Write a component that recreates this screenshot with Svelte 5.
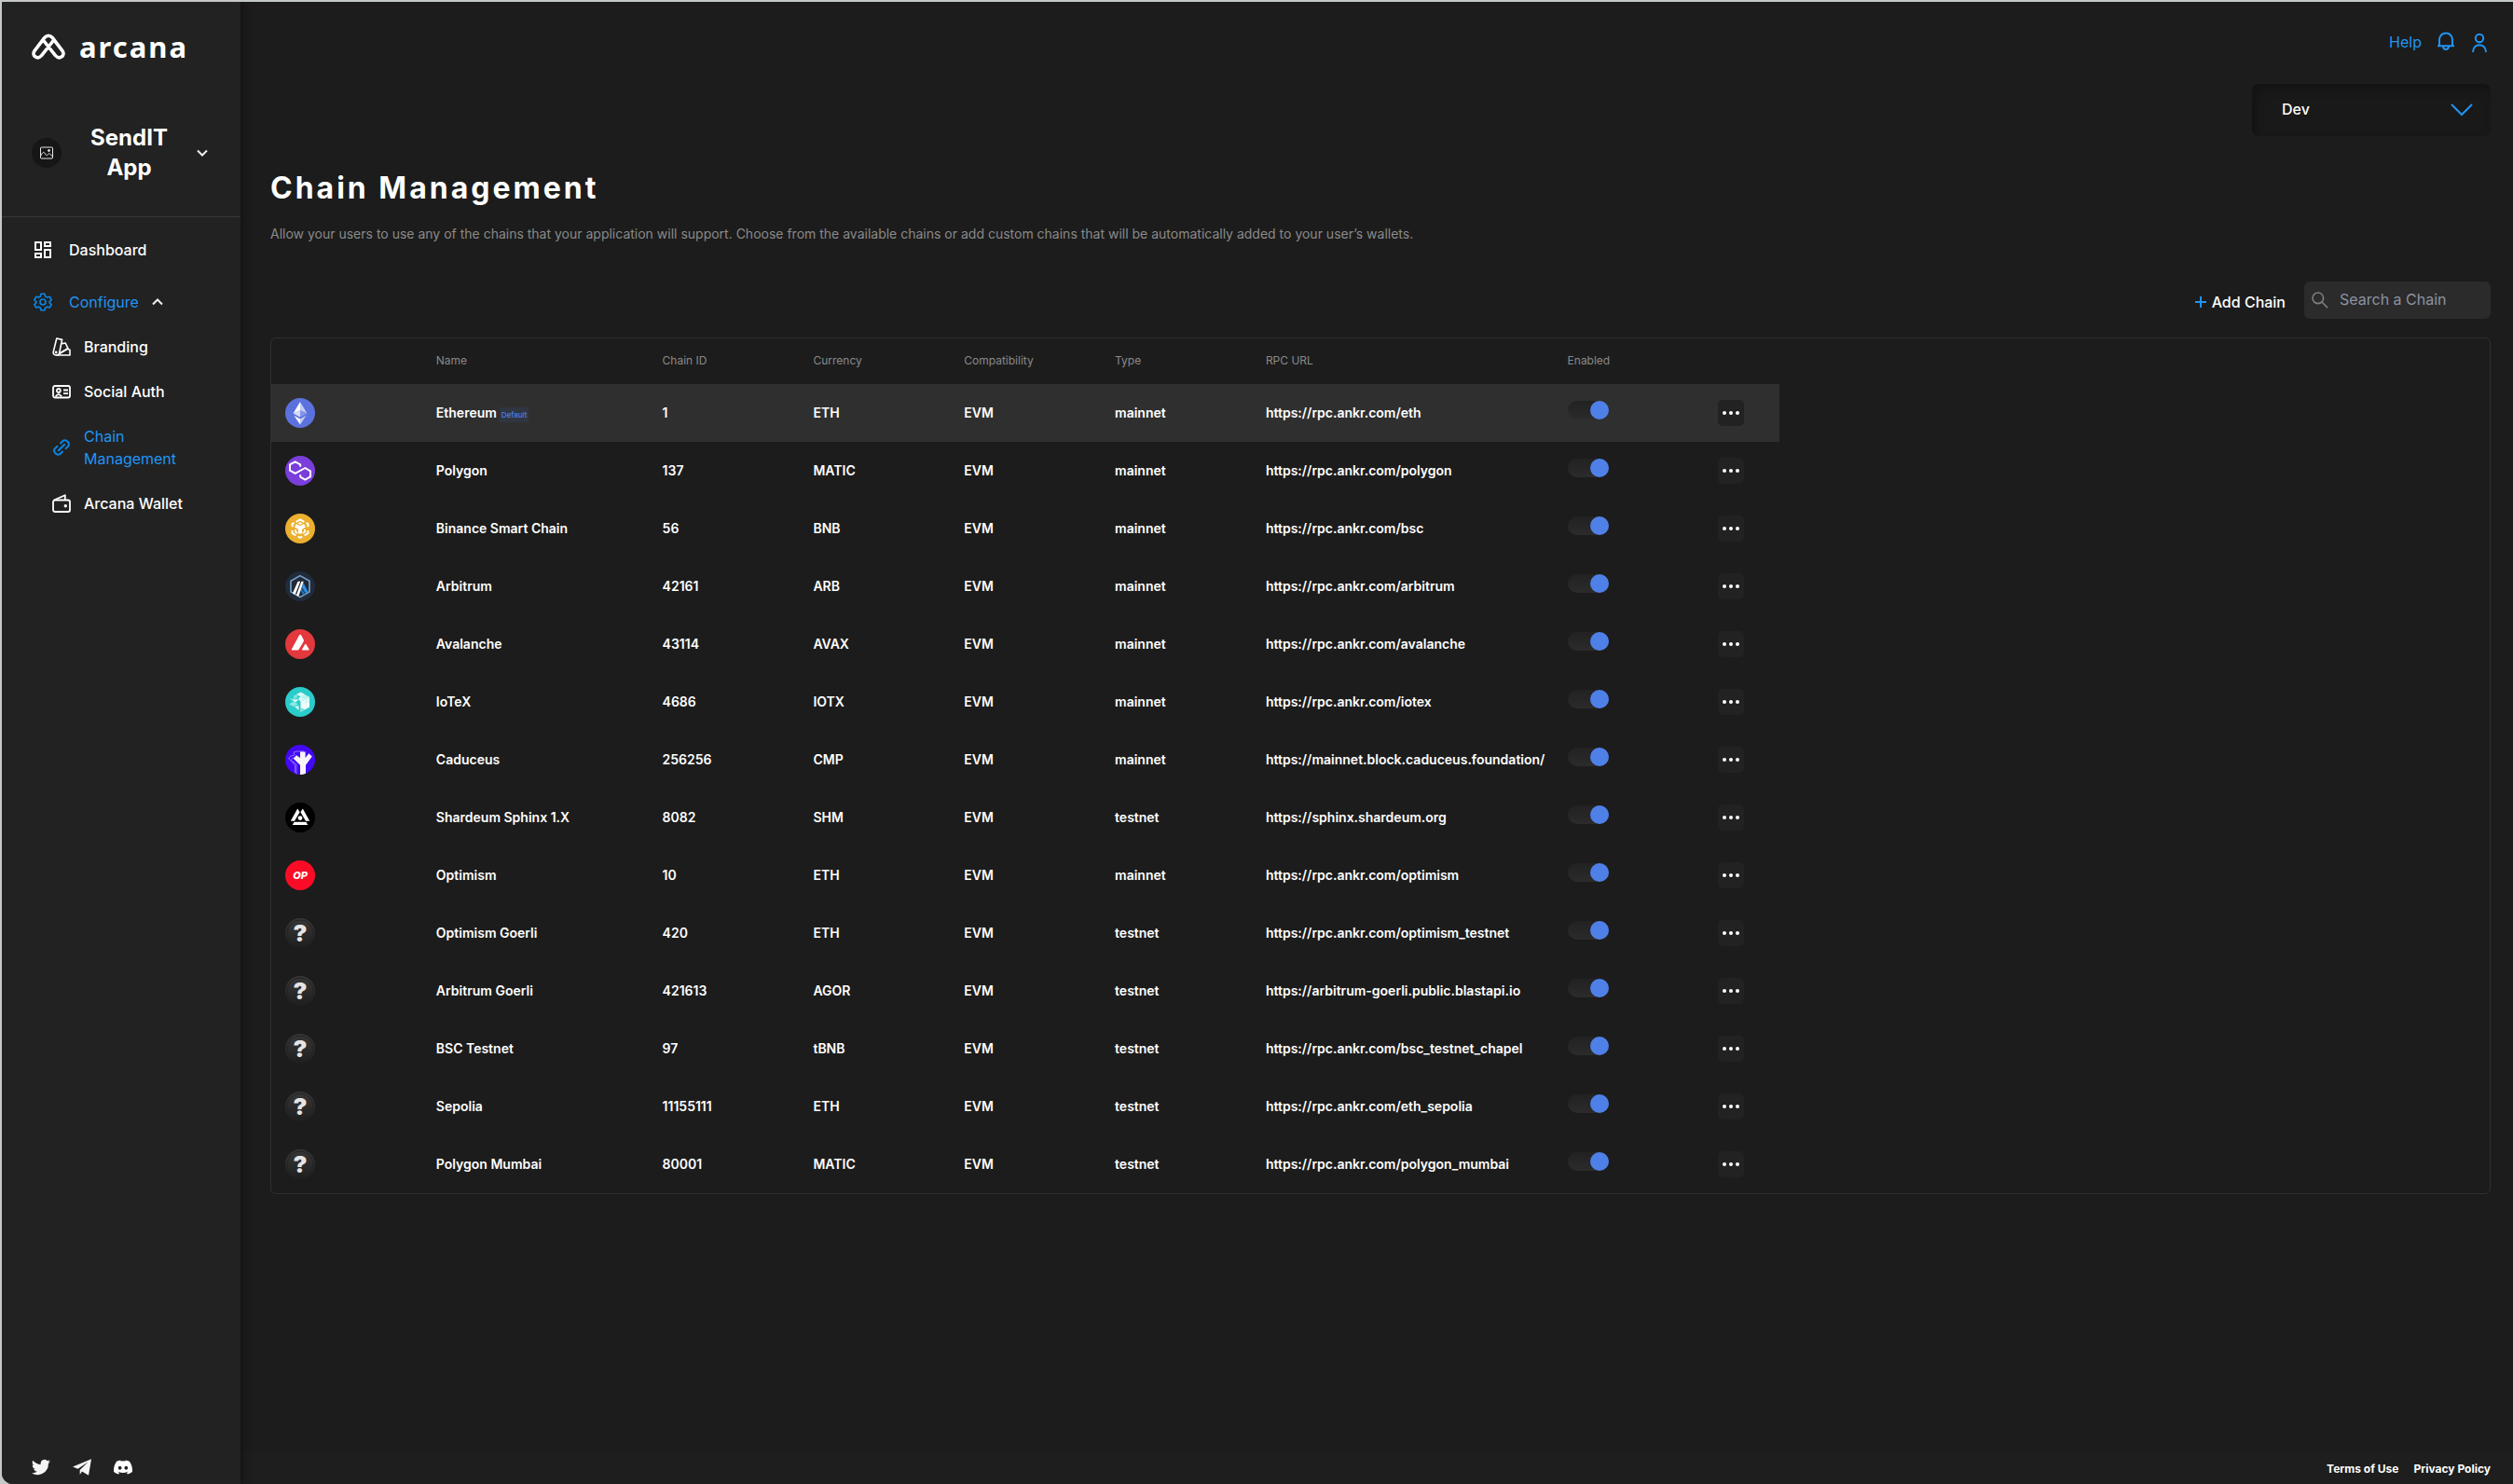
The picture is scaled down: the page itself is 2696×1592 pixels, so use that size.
<script>
  const chains = [
    { icon: 'eth', name: 'Ethereum', id: '1', currency: 'ETH', type: 'mainnet', url: 'https://rpc.ankr.com/eth', isDefault: true },
    { icon: 'polygon', name: 'Polygon', id: '137', currency: 'MATIC', type: 'mainnet', url: 'https://rpc.ankr.com/polygon' },
    { icon: 'bsc', name: 'Binance Smart Chain', id: '56', currency: 'BNB', type: 'mainnet', url: 'https://rpc.ankr.com/bsc' },
    { icon: 'arbitrum', name: 'Arbitrum', id: '42161', currency: 'ARB', type: 'mainnet', url: 'https://rpc.ankr.com/arbitrum' },
    { icon: 'avalanche', name: 'Avalanche', id: '43114', currency: 'AVAX', type: 'mainnet', url: 'https://rpc.ankr.com/avalanche' },
    { icon: 'iotex', name: 'IoTeX', id: '4686', currency: 'IOTX', type: 'mainnet', url: 'https://rpc.ankr.com/iotex' },
    { icon: 'caduceus', name: 'Caduceus', id: '256256', currency: 'CMP', type: 'mainnet', url: 'https://mainnet.block.caduceus.foundation/' },
    { icon: 'shardeum', name: 'Shardeum Sphinx 1.X', id: '8082', currency: 'SHM', type: 'testnet', url: 'https://sphinx.shardeum.org' },
    { icon: 'optimism', name: 'Optimism', id: '10', currency: 'ETH', type: 'mainnet', url: 'https://rpc.ankr.com/optimism' },
    { icon: 'unknown', name: 'Optimism Goerli', id: '420', currency: 'ETH', type: 'testnet', url: 'https://rpc.ankr.com/optimism_testnet' },
    { icon: 'unknown', name: 'Arbitrum Goerli', id: '421613', currency: 'AGOR', type: 'testnet', url: 'https://arbitrum-goerli.public.blastapi.io' },
    { icon: 'unknown', name: 'BSC Testnet', id: '97', currency: 'tBNB', type: 'testnet', url: 'https://rpc.ankr.com/bsc_testnet_chapel' },
    { icon: 'unknown', name: 'Sepolia', id: '11155111', currency: 'ETH', type: 'testnet', url: 'https://rpc.ankr.com/eth_sepolia' },
    { icon: 'unknown', name: 'Polygon Mumbai', id: '80001', currency: 'MATIC', type: 'testnet', url: 'https://rpc.ankr.com/polygon_mumbai' },
  ];
  let enabled = $state(chains.map(() => true));
  let query = $state('');
</script>

{#snippet chainIcon(kind)}
  <svg class="chain-icon" viewBox="0 0 32 32" aria-hidden="true">
    {#if kind === 'eth'}
      <circle cx="16" cy="16" r="16" fill="#5b72de" />
      <path d="M16 4 8.600 16.400 16 13.200Z" fill="#fff" />
      <path d="M16 4 23.400 16.400 16 13.200Z" fill="#c3cbf5" />
      <path d="M8.600 16.400 16 13.200V20.400Z" fill="#d5dbf8" />
      <path d="M23.400 16.400 16 13.200V20.400Z" fill="#8595e6" />
      <path d="M9.400 18.700 16 22.400V28.600Z" fill="#fff" />
      <path d="M22.600 18.700 16 22.400V28.600Z" fill="#c3cbf5" />
    {:else if kind === 'polygon'}
      <circle cx="16" cy="16" r="16" fill="#7a3edb" />
      <path d="M16.200 11.700V9.400L10.700 6.300 5 9.400V15.700L10.700 18.900 21.300 13 27 16.300V22.400L21.300 25.600 16.200 22.600V20.200" fill="none" stroke="#fff" stroke-width="2" stroke-linejoin="round" />
    {:else if kind === 'bsc'}
      <circle cx="16" cy="16" r="16" fill="#ecb02f" />
      <g fill="none" stroke="#fff" stroke-width="2">
        <path d="M11.600 8.800 16 6.300 20.400 8.800M7.600 14.300V11L9.600 9.900M22.400 9.900 24.400 11V14.300M7.600 18V21.200L11.400 23.400M24.400 18V21.200L20.600 23.400M13.600 24.500 16 25.900 18.400 24.500" />
        <path d="M11 12.800 16 15.600 21 12.800M16 15V21.600" stroke-width="4" />
        <path d="M11 17V19.500L13.200 20.800M21 17V19.500L18.800 20.800" />
      </g>
      <path d="M16 9 18.400 10.400 16 11.800 13.600 10.400Z" fill="#fff" />
    {:else if kind === 'arbitrum'}
      <circle cx="16" cy="16" r="16" fill="#202b3c" />
      <path d="M16 4.600 26 10.300V21.900L16 27.600 6 21.900V10.300Z" fill="#1f2937" stroke="#7ba3c6" stroke-width="1.600" />
      <path d="M17.800 17.200 19.600 12.600 24.600 22 22 23.600Z" fill="#2b8fe8" />
      <path d="M16.400 20.400 17.400 18 21.200 24.200 19.400 25.400Z" fill="#1d74c4" />
      <path d="M13.500 10.800H16.200L10.600 25 8 23.300ZM17.400 10.800H19.800L14.300 26.800 11.900 25.500Z" fill="#fff" />
    {:else if kind === 'avalanche'}
      <circle cx="16" cy="16" r="16" fill="#e2383e" />
      <path d="M16.100 5.800q.7 0 1.100.7l2.500 4.700q.5 1 0 2L14.600 21.700q-.5.800-1.400.8H7.600q-1.200 0-.7-1.100L15 6.500q.4-.7 1.100-.7ZM21 16.400q.8-1.300 1.600 0L25.400 21.300q.5 1.200-.6 1.200H18.800q-1.200 0-.6-1.200Z" fill="#fff" />
    {:else if kind === 'iotex'}
      <circle cx="16" cy="16" r="16" fill="#2accc9" />
      <path d="M16.500 5.400 26 10.700 16.500 16Z" fill="#b9f2ef" />
      <path d="M16.500 16 26 10.700V21.500L16.500 27Z" fill="#fff" opacity=".92" />
      <path d="M16.500 5.400 21 8 16.500 10.600 12 8ZM14 12l2.500-1.400L21 13.200 16.500 16Z" fill="#d9f9f7" />
      <path d="M21 13.400 26 10.700 26 16 21 18.800Z" fill="#d9f9f7" />
      <path d="M9 9.400 13 7.600V11.600L9 13.400Z" fill="#7ee4e1" />
      <path d="M4.400 12 9 13.400 15 13 11 16.400Z" fill="#dbfaf8" />
      <path d="M4 18.400 9 15.600 14 18.400 9 21Z" fill="#8ae8e5" />
      <path d="M10 21 14.500 20V25Z" fill="#d9f9f7" />
      <path d="M16.500 22 21 24.200 17 27Z" fill="#6fe0dd" />
    {:else if kind === 'caduceus'}
      <clipPath id="cad"><circle cx="16" cy="16" r="16" /></clipPath>
      <circle cx="16" cy="16" r="16" fill="#4309f5" />
      <g clip-path="url(#cad)">
        <path d="M12 32V21L3.500 15 6 12 10 11 9 8 13 7H20M9.500 13 6 16.500 10.500 22V30" fill="none" stroke="#9378fb" stroke-width=".9" />
        <path d="M16 7.600H21.600V14L25.200 9.300 28.800 12.600 22 21.800V32H16V21.800L8.800 14.800 12 11.300 16 14Z" fill="#f7f4f8" />
      </g>
    {:else if kind === 'shardeum'}
      <circle cx="16" cy="16" r="16" fill="#000" />
      <path d="M13.200 6.600 15.600 10.200 10 19.800H5.800ZM18.800 6.600 26.200 19.800H22L16.400 10.200Z" fill="#fff" />
      <path d="M9.600 20.800H22.400L24.200 24H7.800Z" fill="#fff" />
      <circle cx="16" cy="16.600" r="2.400" fill="#fff" />
    {:else if kind === 'optimism'}
      <circle cx="16" cy="16" r="16" fill="#fb0c26" />
      <text class="op" x="16" y="20" text-anchor="middle">OP</text>
    {:else}
      <linearGradient id="coin" x1="0" y1="0" x2="0" y2="1">
        <stop offset="0" stop-color="#383838" />
        <stop offset="1" stop-color="#1e1e1e" />
      </linearGradient>
      <circle cx="16" cy="16" r="16" fill="url(#coin)" />
      <circle cx="16" cy="16" r="14" fill="none" stroke="#232323" />
      <text class="question" x="16" y="25" text-anchor="middle">?</text>
    {/if}
  </svg>
{/snippet}

<div class="app">
  <aside class="sidebar">
    <a class="brand" href="#home">
      <svg class="mark" viewBox="0 0 36 28" aria-hidden="true">
        <g fill="none" stroke="#fff" stroke-width="3.600" stroke-linecap="round" stroke-linejoin="round">
          <path d="M22.500 8.500 10.500 23.600C6 28.500 -.5 23.500 3 18.600L13.600 4.600Q18 0 22.400 4.600L33 18.600C36.500 23.500 30 28.500 25.500 23.600L13.500 8.500" />
        </g>
      </svg>
      <span class="wordmark">arcana</span>
    </a>

    <button class="app-switch" type="button">
      <span class="app-thumb">
        <svg viewBox="0 0 16 16" width="16" height="16" fill="none" stroke="#e8e8e8" aria-hidden="true">
          <rect x="1.500" y="2" width="13" height="12" rx="1" />
          <path d="M1.500 11.500C4 6.500 5 6.500 6.500 9S8.500 11 9.500 9.500 12 9 14.500 12" />
          <circle cx="10.500" cy="5.500" r="1" fill="#e8e8e8" />
        </svg>
      </span>
      <span class="app-name">SendIT App</span>
      <svg class="caret" viewBox="0 0 12 8" aria-hidden="true"><path d="M1 1.500 6 6.500 11 1.500" /></svg>
    </button>

    <nav class="nav">
      <a class="item" href="#dashboard">
        <svg viewBox="0 0 20 20" fill="none" stroke="#fff" stroke-width="2" aria-hidden="true">
          <path d="M2 2H8V10H2ZM12 2H18V6H12ZM2 14H8V18H2ZM12 10H18V18H12Z" />
        </svg>
        Dashboard
      </a>
      <a class="item active" href="#configure">
        <svg viewBox="0 0 24 24" fill="none" stroke="#0a84e4" stroke-width="2" stroke-linejoin="round" aria-hidden="true">
          <path d="M9.600 1.500H14.400L15.200 4.700 17.400 6 20.600 5.100 23 9.300 20.600 11.500V13L23 15.200 20.600 19.200 17.400 18.200 15.200 19.500 14.400 22.500H9.600L8.800 19.500 6.600 18.200 3.400 19.200 1 15.200 3.400 13V11.500L1 9.300 3.400 5.100 6.600 6 8.800 4.700Z" />
          <circle cx="12" cy="12" r="3.600" />
        </svg>
        <span class="with-caret">
          Configure
          <svg class="caret" viewBox="0 0 12 8" aria-hidden="true"><path d="M1 6.500 6 1.500 11 6.500" /></svg>
        </span>
      </a>
      <div class="sub">
        <a href="#branding">
          <svg viewBox="0 0 20 20" fill="none" stroke="#fff" stroke-width="1.600" stroke-linejoin="round" aria-hidden="true">
            <path d="M4.800 1 10.600 2.400 7.600 17Q6.800 19.400 4 19 .8 18.500 1.200 15.600Z" />
            <path d="M10 6.800 14.200 6 17 11.800 7.500 17.500" />
            <path d="M8 17 16.500 12.200 19 13.400V19H4.500" />
            <circle cx="4.200" cy="16" r=".6" />
          </svg>
          Branding
        </a>
        <a href="#social-auth">
          <svg viewBox="0 0 20 20" fill="none" stroke="#fff" stroke-width="1.800" aria-hidden="true">
            <rect x="1" y="4" width="18" height="12.500" rx="2" />
            <circle cx="6.800" cy="9" r="2" />
            <path d="M3.500 15.500Q6.800 10.800 10.200 15.500M12 8.500H17M12 12.200H17" />
          </svg>
          Social Auth
        </a>
        <a class="active" href="#chain-management">
          <svg viewBox="0 0 20 20" fill="none" stroke="#0a84e4" stroke-width="2" stroke-linecap="round" aria-hidden="true">
            <path d="M6.800 13.200 13.200 6.800M9 5.500 11.800 2.700A4.400 4.400 0 0 1 17.500 8.500L14.500 11.200M11 14.500 8.200 17.300A4.400 4.400 0 0 1 2.500 11.500L5.500 8.800" />
          </svg>
          <span>Chain Management</span>
        </a>
        <a href="#wallet">
          <svg viewBox="0 0 20 20" fill="none" stroke="#fff" stroke-width="1.800" stroke-linejoin="round" aria-hidden="true">
            <rect x="1" y="6.500" width="18" height="12.500" rx="2" />
            <path d="M2 6.500 13.800 1.200V6.500" />
            <circle cx="14.300" cy="12.800" r=".8" fill="#fff" />
          </svg>
          Arcana Wallet
        </a>
      </div>
    </nav>

    <div class="socials">
      <a href="#twitter" aria-label="Twitter">
        <svg viewBox="0 0 24 24" fill="#f5f5f5"><path d="M23.900 4.600a10 10 0 0 1-2.800.8 4.900 4.900 0 0 0 2.100-2.700 9.800 9.800 0 0 1-3.100 1.200 4.900 4.900 0 0 0-8.400 4.500A14 14 0 0 1 1.600 3.200a4.900 4.900 0 0 0 1.500 6.500 4.900 4.900 0 0 1-2.200-.6v.1a4.900 4.900 0 0 0 3.900 4.800 5 5 0 0 1-2.200.1 4.900 4.900 0 0 0 4.600 3.400A9.900 9.900 0 0 1 0 19.500a14 14 0 0 0 21.500-12.400 10 10 0 0 0 2.400-2.500Z" /></svg>
      </a>
      <a href="#telegram" aria-label="Telegram">
        <svg viewBox="0 0 24 24" fill="#f5f5f5"><path d="M0 11.400 24 1.500 20.400 22.400 12 17.500 9.200 21.500V15.500L20 5 6.600 14Z" /></svg>
      </a>
      <a href="#discord" aria-label="Discord">
        <svg viewBox="0 0 24 24" fill="#fff"><path fill-rule="evenodd" d="M20.300 4.400A19.800 19.800 0 0 0 15.400 2.900l-.6 1.200a18 18 0 0 0-5.600 0L8.600 2.900A19.700 19.700 0 0 0 3.700 4.400C.5 9-.3 13.600.1 18.100A20 20 0 0 0 6.100 21.100L7.400 19.100 5.500 18.100l.4-.3a14 14 0 0 0 12.200 0l.4.3-1.900 1 1.300 2a20 20 0 0 0 6-3c.5-5.200-.8-9.700-3.600-13.700ZM8 15.300c-1.200 0-2.200-1-2.200-2.400s1-2.400 2.200-2.400 2.200 1.100 2.200 2.400-1 2.400-2.200 2.400Zm8 0c-1.200 0-2.200-1-2.200-2.400s1-2.400 2.200-2.400 2.200 1.100 2.200 2.400-1 2.400-2.200 2.400Z" /></svg>
      </a>
    </div>
  </aside>

  <div class="page">
    <header class="topbar">
      <a class="help" href="#help">Help</a>
      <button class="icon-btn" type="button" aria-label="Notifications">
        <svg viewBox="0 0 20 22" width="20" height="22" fill="none" stroke="#2194f3" stroke-width="2" stroke-linejoin="round" aria-hidden="true">
          <path d="M3 15V8.500A7 7 0 0 1 17 8.500V15M1 15.200H19M7 16C7.500 20 12.500 20 13 16" />
        </svg>
      </button>
      <button class="icon-btn" type="button" aria-label="Profile">
        <svg viewBox="0 0 20 22" width="20" height="22" fill="none" stroke="#2194f3" stroke-width="2" aria-hidden="true">
          <circle cx="10" cy="7" r="4.200" />
          <path d="M3 22C3 11.500 17 11.500 17 22" />
        </svg>
      </button>
    </header>

    <main class="content">
      <div class="env">
        <select aria-label="Environment">
          <option>Dev</option>
        </select>
        <svg viewBox="0 0 24 14" width="24" height="14" fill="none" stroke="#2194f3" stroke-width="2" aria-hidden="true"><path d="M1 1 12 12 23 1" /></svg>
      </div>

      <h1>Chain Management</h1>
      <p class="intro">Allow your users to use any of the chains that your application will support. Choose from the available chains or add custom chains that will be automatically added to your user’s wallets.</p>

      <div class="tools">
        <button class="add" type="button">
          <svg viewBox="0 0 12 12" width="12" height="12" stroke="#2194f3" stroke-width="2" aria-hidden="true"><path d="M6 0V12M0 6H12" /></svg>
          Add Chain
        </button>
        <label class="search">
          <svg viewBox="0 0 18 18" width="18" height="18" fill="none" stroke="#808080" stroke-width="1.600" aria-hidden="true">
            <circle cx="6.800" cy="6.800" r="5.800" />
            <path d="M11 11 17.200 17.200" />
          </svg>
          <input type="text" placeholder="Search a Chain" aria-label="Search a Chain" bind:value={query} />
        </label>
      </div>

      <div class="panel">
        <table>
          <colgroup>
            <col class="w10" /><col class="w15" /><col class="w10" /><col class="w10" /><col class="w10" />
            <col class="w10" /><col class="w20" /><col class="w10" /><col class="w5" />
          </colgroup>
          <thead>
            <tr>
              <th></th>
              <th>Name</th>
              <th>Chain ID</th>
              <th>Currency</th>
              <th>Compatibility</th>
              <th>Type</th>
              <th>RPC URL</th>
              <th>Enabled</th>
              <th></th>
            </tr>
          </thead>
          <tbody>
            {#each chains as chain, i}
              <tr class:default={chain.isDefault}>
                <td>{@render chainIcon(chain.icon)}</td>
                <td>{chain.name}{#if chain.isDefault}<span class="badge">Default</span>{/if}</td>
                <td>{chain.id}</td>
                <td>{chain.currency}</td>
                <td>EVM</td>
                <td>{chain.type}</td>
                <td>{chain.url}</td>
                <td class="switch-cell">
                  <input class="switch" type="checkbox" aria-label="Enable {chain.name}" bind:checked={enabled[i]} />
                </td>
                <td>
                  <button class="more" type="button" aria-label="Options for {chain.name}">
                    <svg viewBox="0 0 20 4" width="20" height="4" fill="#fff" aria-hidden="true"><circle cx="3" cy="2" r="2" /><circle cx="10" cy="2" r="2" /><circle cx="17" cy="2" r="2" /></svg>
                  </button>
                </td>
              </tr>
            {/each}
          </tbody>
        </table>
      </div>
    </main>

    <footer class="footer">
      <a href="#terms">Terms of Use</a>
      <a href="#privacy">Privacy Policy</a>
    </footer>
  </div>
</div>

<style>
  :global(body) {
    background: #c5c8c8;
  }
  .app, .app :global(*) {
    box-sizing: border-box;
  }
  .app {
    display: flex;
    min-height: calc(100vh - 2px);
    margin: 2px 0 0 2px;
    border-bottom-left-radius: 12px;
    overflow: hidden;
    background: #1c1c1c;
    color: #fff;
    font-family: Inter, "Liberation Sans", sans-serif;
    font-size: 16px;
    font-weight: 500;
    line-height: 24px;
  }
  a {
    color: inherit;
    text-decoration: none;
  }
  button, input, select {
    margin: 0;
    padding: 0;
    border: 0;
    background: none;
    color: inherit;
    font: inherit;
  }

  .sidebar {
    display: flex;
    flex: 0 0 256px;
    flex-direction: column;
    background: #222;
    box-shadow: 2px 0 8px #111;
    z-index: 1;
  }
  .brand {
    display: flex;
    align-items: center;
    gap: 15px;
    height: 96px;
    padding-left: 32px;
  }
  .mark {
    width: 36px;
    height: 28px;
  }
  .wordmark {
    font-family: "Noto Sans", sans-serif;
    font-size: 31px;
    font-weight: 700;
    letter-spacing: 2px;
  }
  .app-switch {
    display: flex;
    align-items: center;
    justify-content: space-between;
    height: 135px;
    padding: 0 35px 2px 32px;
    border-bottom: 1px solid #363636;
  }
  .app-thumb {
    display: grid;
    place-items: center;
    width: 32px;
    height: 32px;
    border-radius: 50%;
    background: #161616;
  }
  .app-name {
    width: 90px;
    font-size: 24px;
    font-weight: 700;
    line-height: 32px;
    text-align: center;
  }
  .caret {
    width: 12px;
    height: 8px;
    fill: none;
    stroke: #f0f0f0;
    stroke-width: 2;
  }
  .nav {
    display: flex;
    flex-direction: column;
    gap: 32px;
    padding: 23px 34px;
  }
  .item {
    display: flex;
    align-items: center;
    gap: 18px;
  }
  .with-caret {
    display: flex;
    align-items: center;
    gap: 14px;
  }
  .item > svg, .sub svg {
    flex: none;
    width: 20px;
    height: 20px;
  }
  .active {
    color: #2194f3;
    font-weight: 400;
  }
  .sub {
    display: flex;
    flex-direction: column;
    gap: 24px;
    margin-top: -8px;
    padding-left: 20px;
  }
  .sub a {
    display: flex;
    align-items: center;
    gap: 14px;
  }
  .socials {
    display: flex;
    gap: 24px;
    margin-top: auto;
    padding: 0 32px 8px;
  }
  .socials svg {
    display: block;
    width: 20px;
    height: 20px;
  }

  .page {
    display: flex;
    flex: 1;
    flex-direction: column;
    min-width: 0;
  }
  .topbar {
    display: flex;
    align-items: center;
    justify-content: flex-end;
    gap: 16px;
    height: 88px;
    padding: 0 26px 2px 0;
  }
  .help {
    color: #2194f3;
    font-weight: 400;
  }
  .icon-btn {
    display: grid;
    place-items: center;
    cursor: pointer;
  }
  .content {
    display: flex;
    flex: 1;
    flex-direction: column;
    padding: 0 24px 32px 32px;
  }
  .env {
    display: grid;
    align-self: flex-end;
    align-items: center;
    width: 256px;
    height: 56px;
    border-radius: 8px;
    background: #191919;
    box-shadow: inset 4px 5px 10px #131313;
  }
  .env select, .env svg {
    grid-area: 1 / 1;
  }
  .env select {
    height: 56px;
    padding: 0 32px 2px;
    appearance: none;
  }
  .env svg {
    justify-self: end;
    margin-right: 19px;
    pointer-events: none;
  }
  h1 {
    margin: 36px 0 0;
    font-size: 32px;
    font-weight: 700;
    line-height: 40px;
    letter-spacing: 3px;
  }
  .intro {
    margin: 17px 0 0;
    color: #8a8a8a;
    font-size: 14px;
    font-weight: 400;
  }
  .tools {
    display: flex;
    align-items: center;
    justify-content: flex-end;
    gap: 20px;
    margin: 39px 0 20px;
  }
  .add {
    display: flex;
    align-items: center;
    gap: 6px;
    padding-top: 4px;
    cursor: pointer;
  }
  .search {
    display: flex;
    align-items: center;
    gap: 12px;
    width: 200px;
    height: 40px;
    padding: 0 8px;
    border-radius: 6px;
    background: #2b2b2b;
  }
  .search svg {
    flex: none;
  }
  .search input {
    width: 100%;
    min-width: 0;
    padding-bottom: 2px;
    outline: 0;
    font-weight: 400;
  }
  .search input::placeholder {
    color: #8d93a1;
    opacity: 1;
  }

  .panel {
    border: 1px solid #2f2f2f;
    border-radius: 6px;
    overflow: hidden;
  }
  table {
    width: 68%;
    border-collapse: collapse;
    table-layout: fixed;
  }
  .w5 { width: 5%; }
  .w10 { width: 10%; }
  .w15 { width: 15%; }
  .w20 { width: 20%; }
  th, td {
    padding: 0 0 0 15px;
    text-align: left;
    white-space: nowrap;
  }
  th {
    height: 49px;
    padding-bottom: 2px;
    color: #8a8a8a;
    font-size: 12px;
    font-weight: 400;
  }
  td {
    height: 62px;
    font-size: 14px;
    font-weight: 600;
  }
  .default {
    background: #2f2f2f;
  }
  .chain-icon {
    display: block;
    width: 32px;
    height: 32px;
  }
  .op {
    fill: #fff;
    font-size: 11px;
    font-style: italic;
    font-weight: 800;
  }
  .question {
    fill: #e4e4e4;
    font-size: 25px;
    font-weight: 900;
  }
  .badge {
    display: inline-block;
    margin-left: 3px;
    padding: 0 2px;
    background: #2f3642;
    color: #4f80e8;
    font-size: 8px;
    font-weight: 500;
    line-height: 16px;
  }
  .switch-cell {
    padding-bottom: 6px;
  }
  .switch {
    display: flex;
    width: 44px;
    height: 20px;
    border-radius: 10px;
    appearance: none;
    background: linear-gradient(#222, #2b2b2b);
    cursor: pointer;
  }
  .switch::before {
    content: "";
    width: 20px;
    height: 20px;
    border-radius: 50%;
    background: #777;
  }
  .switch:checked::before {
    margin-left: auto;
    background: #4f80e8;
  }
  .more {
    display: grid;
    place-items: center;
    width: 28px;
    height: 28px;
    border-radius: 5px;
    background: #222;
    cursor: pointer;
  }
  .footer {
    display: flex;
    align-items: center;
    justify-content: flex-end;
    gap: 16px;
    height: 36px;
    padding: 4px 24px 0;
    background: #1e1e1e;
    font-size: 12px;
    font-weight: 700;
  }
</style>
